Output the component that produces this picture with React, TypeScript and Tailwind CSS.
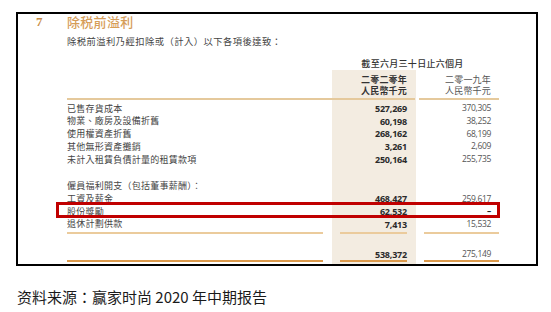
const cjk = "font-['Noto_Sans_CJK_TC','Noto_Sans_CJK_SC',sans-serif]";
const num = "font-['Open_Sans','Noto_Sans',sans-serif]";

interface Row {
  label: string;
  cur: string;
  prev: string;
  highlight?: boolean;
}

const groupA: Row[] = [
  { label: "已售存貨成本", cur: "527,269", prev: "370,305" },
  { label: "物業、廠房及設備折舊", cur: "60,198", prev: "38,252" },
  { label: "使用權資產折舊", cur: "268,162", prev: "68,199" },
  { label: "其他無形資產攤銷", cur: "3,261", prev: "2,609" },
  { label: "未計入租賃負債計量的租賃款項", cur: "250,164", prev: "255,735" },
];

const groupB: Row[] = [
  { label: "僱員福利開支（包括董事薪酬）：", cur: "", prev: "" },
  { label: "工資及薪金", cur: "468,427", prev: "259,617" },
  { label: "股份獎勵", cur: "62,532", prev: "–", highlight: true },
  { label: "退休計劃供款", cur: "7,413", prev: "15,532" },
];

function DataRow({ r, rule }: { r: Row; rule?: "light" | "thick" }) {
  const dash = r.prev === "–";
  const ruleCls = rule === "thick" ? "mt-0 bg-[#dc9a4c]" : "mt-[1.5px] bg-[#ebcb9c]";
  return (
    <div className="relative grid grid-cols-[265px_84px_83px] h-[12.7px] items-center">
      <div className={`${cjk} text-[9px] leading-[12px] tracking-[0.25px] text-[#444]`}>{r.label}</div>
      <div className={`${num} h-full flex items-center justify-end pr-[9px] bg-[#f3ece1] text-[9px] font-bold tracking-[-0.2px] text-[#2a2a2a]`}>
        {r.cur}
      </div>
      <div
        className={`${num} flex items-center justify-end pr-[8px] text-[8.5px] tracking-[-0.35px] ${
          dash ? "font-bold text-[#222]" : "text-[#555]"
        }`}
      >
        {r.prev}
      </div>
      {r.highlight && (
        <div className="absolute left-[-11px] top-[-3px] w-[444px] h-[16px] border-[3px] border-[#c00000]" />
      )}
      {rule && (
        <>
          <div className={`absolute left-0 top-full w-[256px] h-[2px] ${ruleCls}`} />
          <div className={`absolute left-[273px] top-full w-[67px] h-[2px] ${ruleCls}`} />
          <div className={`absolute left-[357px] top-full w-[75px] h-[2px] ${ruleCls}`} />
        </>
      )}
    </div>
  );
}

function Spacer({ h }: { h: string }) {
  return (
    <div className={`grid grid-cols-[265px_84px_83px] ${h}`}>
      <div />
      <div className="bg-[#f3ece1]" />
      <div />
    </div>
  );
}

export default function App() {
  return (
    <div className="w-[551px] h-[312px] bg-white overflow-hidden">
      <div className="ml-[16px] mt-[12px] w-[522px] h-[254px] border-2 border-black overflow-hidden">
        <div className="flex items-center h-[15px]">
          <div className="w-[49px] pl-[18px] font-['Liberation_Serif',serif] font-bold text-[13px] text-[#c88b45]">7</div>
          <div className={`${cjk} text-[13px] leading-[15px] font-medium tracking-[0.3px] text-[#d69d58]`}>除税前溢利</div>
        </div>
        <div className="pl-[49px]">
          <div className={`${cjk} mt-[6px] h-[12px] text-[9.3px] leading-[12px] tracking-[0.45px] text-[#444]`}>
            除税前溢利乃經扣除或（計入）以下各項後達致：
          </div>

          <div className="mt-[10px] grid grid-cols-[265px_167px] h-[13px] items-center">
            <div />
            <div className={`${cjk} text-center pr-[6px] text-[9px] leading-[13px] font-medium tracking-[0.3px] text-[#333]`}>
              截至六月三十日止六個月
            </div>
          </div>

          <div className="relative grid grid-cols-[265px_84px_83px]">
            <div />
            <div className={`${cjk} bg-[#f3ece1] pt-[3.5px] pb-[3.5px] pr-[9px] text-right text-[9px] leading-[11.5px] font-bold tracking-[0.2px] text-[#333]`}>
              <div>二零二零年</div>
              <div>人民幣千元</div>
            </div>
            <div className={`${cjk} pt-[3.5px] pb-[3.5px] pr-[8px] text-right text-[9px] leading-[11.5px] tracking-[0.2px] text-[#555]`}>
              <div>二零一九年</div>
              <div>人民幣千元</div>
            </div>
            <div className="absolute left-0 bottom-0 w-[348px] h-[2px] bg-[#e5c99c]" />
            <div className="absolute left-[352px] bottom-0 w-[80px] h-[2px] bg-[#e5c99c]" />
          </div>

          <Spacer h="h-[2px]" />
          {groupA.map((r) => (
            <DataRow key={r.label} r={r} />
          ))}
          <Spacer h="h-[14px]" />
          {groupB.map((r) => (
            <DataRow key={r.label} r={r} rule={r.label === "退休計劃供款" ? "light" : undefined} />
          ))}
          <Spacer h="h-[17.5px]" />
          <DataRow r={{ label: "", cur: "538,372", prev: "275,149" }} rule="thick" />
          <Spacer h="h-[6px]" />
        </div>
      </div>
      <div className={`${cjk} ml-[17px] mt-[21px] text-[15px] leading-[20px] text-[#1a1a1a]`}>
        资料来源：赢家时尚 2020 年中期报告
      </div>
    </div>
  );
}
